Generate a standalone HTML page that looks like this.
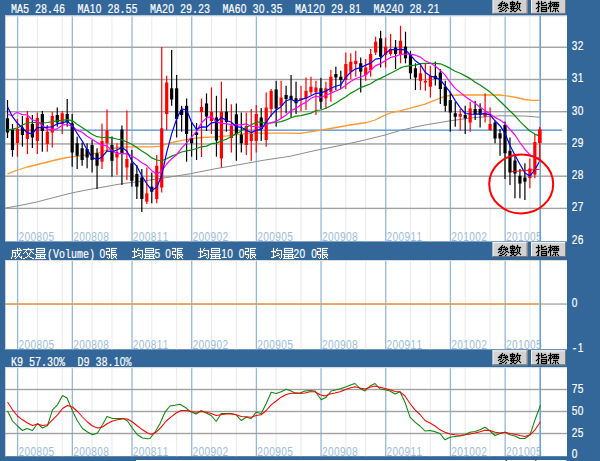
<!DOCTYPE html>
<html><head><meta charset="utf-8"><title>chart</title>
<style>html,body{margin:0;padding:0;background:#336699;overflow:hidden}body{width:600px;height:461px;font-family:"Liberation Mono",monospace}</style>
</head><body>
<svg width="600" height="461" viewBox="0 0 600 461" style="display:block">
<rect width="600" height="461" fill="#336699"/>
<rect x="5" y="15.5" width="562" height="225.9" fill="#fff"/>
<rect x="5" y="15.5" width="562" height="1" fill="#d8dde4"/>
<rect x="5" y="15.5" width="1" height="225.9" fill="#c4d2e2"/>
<rect x="5" y="260" width="562" height="89.30000000000001" fill="#fff"/>
<rect x="5" y="260" width="562" height="1" fill="#d8dde4"/>
<rect x="5" y="260" width="1" height="89.30000000000001" fill="#c4d2e2"/>
<rect x="5" y="367.2" width="562" height="89.0" fill="#fff"/>
<rect x="5" y="367.2" width="562" height="1" fill="#d8dde4"/>
<rect x="5" y="367.2" width="1" height="89.0" fill="#c4d2e2"/>
<rect x="136" y="460" width="430.5" height="1" fill="#f4f6f8"/>
<rect x="505.5" y="460" width="1.5" height="1" fill="#555"/><rect x="535" y="460" width="1.5" height="1" fill="#555"/>
<rect x="36.85" y="16.5" width="1" height="224.9" fill="#e9e9e9"/>
<rect x="61.72" y="16.5" width="1" height="224.9" fill="#e9e9e9"/>
<rect x="91.57" y="16.5" width="1" height="224.9" fill="#e9e9e9"/>
<rect x="111.47" y="16.5" width="1" height="224.9" fill="#e9e9e9"/>
<rect x="151.27" y="16.5" width="1" height="224.9" fill="#e9e9e9"/>
<rect x="176.15" y="16.5" width="1" height="224.9" fill="#e9e9e9"/>
<rect x="210.97" y="16.5" width="1" height="224.9" fill="#e9e9e9"/>
<rect x="235.85" y="16.5" width="1" height="224.9" fill="#e9e9e9"/>
<rect x="275.65" y="16.5" width="1" height="224.9" fill="#e9e9e9"/>
<rect x="300.52" y="16.5" width="1" height="224.9" fill="#e9e9e9"/>
<rect x="345.30" y="16.5" width="1" height="224.9" fill="#e9e9e9"/>
<rect x="365.20" y="16.5" width="1" height="224.9" fill="#e9e9e9"/>
<rect x="409.97" y="16.5" width="1" height="224.9" fill="#e9e9e9"/>
<rect x="429.87" y="16.5" width="1" height="224.9" fill="#e9e9e9"/>
<rect x="464.70" y="16.5" width="1" height="224.9" fill="#e9e9e9"/>
<rect x="489.57" y="16.5" width="1" height="224.9" fill="#e9e9e9"/>
<rect x="529.38" y="16.5" width="1" height="224.9" fill="#e9e9e9"/>
<rect x="16.95" y="16.5" width="1.3" height="224.9" fill="#94b8dd"/>
<rect x="71.67" y="16.5" width="1.3" height="224.9" fill="#94b8dd"/>
<rect x="131.38" y="16.5" width="1.3" height="224.9" fill="#94b8dd"/>
<rect x="191.07" y="16.5" width="1.3" height="224.9" fill="#94b8dd"/>
<rect x="255.75" y="16.5" width="1.3" height="224.9" fill="#94b8dd"/>
<rect x="320.42" y="16.5" width="1.3" height="224.9" fill="#94b8dd"/>
<rect x="385.10" y="16.5" width="1.3" height="224.9" fill="#94b8dd"/>
<rect x="449.77" y="16.5" width="1.3" height="224.9" fill="#94b8dd"/>
<rect x="504.50" y="16.5" width="1.3" height="224.9" fill="#94b8dd"/>
<rect x="36.85" y="261" width="1" height="88.3" fill="#e9e9e9"/>
<rect x="61.72" y="261" width="1" height="88.3" fill="#e9e9e9"/>
<rect x="91.57" y="261" width="1" height="88.3" fill="#e9e9e9"/>
<rect x="111.47" y="261" width="1" height="88.3" fill="#e9e9e9"/>
<rect x="151.27" y="261" width="1" height="88.3" fill="#e9e9e9"/>
<rect x="176.15" y="261" width="1" height="88.3" fill="#e9e9e9"/>
<rect x="210.97" y="261" width="1" height="88.3" fill="#e9e9e9"/>
<rect x="235.85" y="261" width="1" height="88.3" fill="#e9e9e9"/>
<rect x="275.65" y="261" width="1" height="88.3" fill="#e9e9e9"/>
<rect x="300.52" y="261" width="1" height="88.3" fill="#e9e9e9"/>
<rect x="345.30" y="261" width="1" height="88.3" fill="#e9e9e9"/>
<rect x="365.20" y="261" width="1" height="88.3" fill="#e9e9e9"/>
<rect x="409.97" y="261" width="1" height="88.3" fill="#e9e9e9"/>
<rect x="429.87" y="261" width="1" height="88.3" fill="#e9e9e9"/>
<rect x="464.70" y="261" width="1" height="88.3" fill="#e9e9e9"/>
<rect x="489.57" y="261" width="1" height="88.3" fill="#e9e9e9"/>
<rect x="529.38" y="261" width="1" height="88.3" fill="#e9e9e9"/>
<rect x="16.95" y="261" width="1.3" height="88.3" fill="#94b8dd"/>
<rect x="71.67" y="261" width="1.3" height="88.3" fill="#94b8dd"/>
<rect x="131.38" y="261" width="1.3" height="88.3" fill="#94b8dd"/>
<rect x="191.07" y="261" width="1.3" height="88.3" fill="#94b8dd"/>
<rect x="255.75" y="261" width="1.3" height="88.3" fill="#94b8dd"/>
<rect x="320.42" y="261" width="1.3" height="88.3" fill="#94b8dd"/>
<rect x="385.10" y="261" width="1.3" height="88.3" fill="#94b8dd"/>
<rect x="449.77" y="261" width="1.3" height="88.3" fill="#94b8dd"/>
<rect x="504.50" y="261" width="1.3" height="88.3" fill="#94b8dd"/>
<rect x="36.85" y="368.2" width="1" height="88.0" fill="#e9e9e9"/>
<rect x="61.72" y="368.2" width="1" height="88.0" fill="#e9e9e9"/>
<rect x="91.57" y="368.2" width="1" height="88.0" fill="#e9e9e9"/>
<rect x="111.47" y="368.2" width="1" height="88.0" fill="#e9e9e9"/>
<rect x="151.27" y="368.2" width="1" height="88.0" fill="#e9e9e9"/>
<rect x="176.15" y="368.2" width="1" height="88.0" fill="#e9e9e9"/>
<rect x="210.97" y="368.2" width="1" height="88.0" fill="#e9e9e9"/>
<rect x="235.85" y="368.2" width="1" height="88.0" fill="#e9e9e9"/>
<rect x="275.65" y="368.2" width="1" height="88.0" fill="#e9e9e9"/>
<rect x="300.52" y="368.2" width="1" height="88.0" fill="#e9e9e9"/>
<rect x="345.30" y="368.2" width="1" height="88.0" fill="#e9e9e9"/>
<rect x="365.20" y="368.2" width="1" height="88.0" fill="#e9e9e9"/>
<rect x="409.97" y="368.2" width="1" height="88.0" fill="#e9e9e9"/>
<rect x="429.87" y="368.2" width="1" height="88.0" fill="#e9e9e9"/>
<rect x="464.70" y="368.2" width="1" height="88.0" fill="#e9e9e9"/>
<rect x="489.57" y="368.2" width="1" height="88.0" fill="#e9e9e9"/>
<rect x="529.38" y="368.2" width="1" height="88.0" fill="#e9e9e9"/>
<rect x="16.95" y="368.2" width="1.3" height="88.0" fill="#94b8dd"/>
<rect x="71.67" y="368.2" width="1.3" height="88.0" fill="#94b8dd"/>
<rect x="131.38" y="368.2" width="1.3" height="88.0" fill="#94b8dd"/>
<rect x="191.07" y="368.2" width="1.3" height="88.0" fill="#94b8dd"/>
<rect x="255.75" y="368.2" width="1.3" height="88.0" fill="#94b8dd"/>
<rect x="320.42" y="368.2" width="1.3" height="88.0" fill="#94b8dd"/>
<rect x="385.10" y="368.2" width="1.3" height="88.0" fill="#94b8dd"/>
<rect x="449.77" y="368.2" width="1.3" height="88.0" fill="#94b8dd"/>
<rect x="504.50" y="368.2" width="1.3" height="88.0" fill="#94b8dd"/>
<rect x="5" y="46.55" width="562" height="1.4" fill="#a2a2a2"/>
<rect x="5" y="78.78" width="562" height="1.4" fill="#a2a2a2"/>
<rect x="5" y="111.01" width="562" height="1.4" fill="#a2a2a2"/>
<rect x="5" y="143.24" width="562" height="1.4" fill="#a2a2a2"/>
<rect x="5" y="175.47" width="562" height="1.4" fill="#a2a2a2"/>
<rect x="5" y="207.70" width="562" height="1.4" fill="#a2a2a2"/>
<rect x="5" y="303.4" width="562" height="1.3" fill="#a2a2a2"/>
<rect x="5" y="388.8" width="562" height="1.4" fill="#a2a2a2"/>
<rect x="5" y="410.8" width="562" height="1.4" fill="#a2a2a2"/>
<rect x="5" y="432.8" width="562" height="1.4" fill="#a2a2a2"/>
<text transform="translate(18.25,240.5) scale(0.74,1)" x="0.25 8.35 16.46 24.57 32.68 40.79" font-family="Liberation Sans, sans-serif" font-size="13.7" fill="#9dbcd9" >200805</text>
<text transform="translate(72.975,240.5) scale(0.74,1)" x="0.25 8.35 16.46 24.57 32.68 40.79" font-family="Liberation Sans, sans-serif" font-size="13.7" fill="#9dbcd9" >200808</text>
<text transform="translate(132.675,240.5) scale(0.74,1)" x="0.25 8.35 16.46 24.57 32.68 40.79" font-family="Liberation Sans, sans-serif" font-size="13.7" fill="#9dbcd9" >200811</text>
<text transform="translate(192.375,240.5) scale(0.74,1)" x="0.25 8.35 16.46 24.57 32.68 40.79" font-family="Liberation Sans, sans-serif" font-size="13.7" fill="#9dbcd9" >200902</text>
<text transform="translate(257.05,240.5) scale(0.74,1)" x="0.25 8.35 16.46 24.57 32.68 40.79" font-family="Liberation Sans, sans-serif" font-size="13.7" fill="#9dbcd9" >200905</text>
<text transform="translate(321.72499999999997,240.5) scale(0.74,1)" x="0.25 8.35 16.46 24.57 32.68 40.79" font-family="Liberation Sans, sans-serif" font-size="13.7" fill="#9dbcd9" >200908</text>
<text transform="translate(386.4,240.5) scale(0.74,1)" x="0.25 8.35 16.46 24.57 32.68 40.79" font-family="Liberation Sans, sans-serif" font-size="13.7" fill="#9dbcd9" >200911</text>
<text transform="translate(451.075,240.5) scale(0.74,1)" x="0.25 8.35 16.46 24.57 32.68 40.79" font-family="Liberation Sans, sans-serif" font-size="13.7" fill="#9dbcd9" >201002</text>
<text transform="translate(505.79999999999995,240.5) scale(0.74,1)" x="0.25 8.35 16.46 24.57 32.68 40.79" font-family="Liberation Sans, sans-serif" font-size="13.7" fill="#9dbcd9" >201005</text>
<text transform="translate(18.25,349.1) scale(0.74,1)" x="0.25 8.35 16.46 24.57 32.68 40.79" font-family="Liberation Sans, sans-serif" font-size="13.7" fill="#9dbcd9" >200805</text>
<text transform="translate(72.975,349.1) scale(0.74,1)" x="0.25 8.35 16.46 24.57 32.68 40.79" font-family="Liberation Sans, sans-serif" font-size="13.7" fill="#9dbcd9" >200808</text>
<text transform="translate(132.675,349.1) scale(0.74,1)" x="0.25 8.35 16.46 24.57 32.68 40.79" font-family="Liberation Sans, sans-serif" font-size="13.7" fill="#9dbcd9" >200811</text>
<text transform="translate(192.375,349.1) scale(0.74,1)" x="0.25 8.35 16.46 24.57 32.68 40.79" font-family="Liberation Sans, sans-serif" font-size="13.7" fill="#9dbcd9" >200902</text>
<text transform="translate(257.05,349.1) scale(0.74,1)" x="0.25 8.35 16.46 24.57 32.68 40.79" font-family="Liberation Sans, sans-serif" font-size="13.7" fill="#9dbcd9" >200905</text>
<text transform="translate(321.72499999999997,349.1) scale(0.74,1)" x="0.25 8.35 16.46 24.57 32.68 40.79" font-family="Liberation Sans, sans-serif" font-size="13.7" fill="#9dbcd9" >200908</text>
<text transform="translate(386.4,349.1) scale(0.74,1)" x="0.25 8.35 16.46 24.57 32.68 40.79" font-family="Liberation Sans, sans-serif" font-size="13.7" fill="#9dbcd9" >200911</text>
<text transform="translate(451.075,349.1) scale(0.74,1)" x="0.25 8.35 16.46 24.57 32.68 40.79" font-family="Liberation Sans, sans-serif" font-size="13.7" fill="#9dbcd9" >201002</text>
<text transform="translate(505.79999999999995,349.1) scale(0.74,1)" x="0.25 8.35 16.46 24.57 32.68 40.79" font-family="Liberation Sans, sans-serif" font-size="13.7" fill="#9dbcd9" >201005</text>
<text transform="translate(18.25,455.9) scale(0.74,1)" x="0.25 8.35 16.46 24.57 32.68 40.79" font-family="Liberation Sans, sans-serif" font-size="13.7" fill="#9dbcd9" >200805</text>
<text transform="translate(72.975,455.9) scale(0.74,1)" x="0.25 8.35 16.46 24.57 32.68 40.79" font-family="Liberation Sans, sans-serif" font-size="13.7" fill="#9dbcd9" >200808</text>
<text transform="translate(132.675,455.9) scale(0.74,1)" x="0.25 8.35 16.46 24.57 32.68 40.79" font-family="Liberation Sans, sans-serif" font-size="13.7" fill="#9dbcd9" >200811</text>
<text transform="translate(192.375,455.9) scale(0.74,1)" x="0.25 8.35 16.46 24.57 32.68 40.79" font-family="Liberation Sans, sans-serif" font-size="13.7" fill="#9dbcd9" >200902</text>
<text transform="translate(257.05,455.9) scale(0.74,1)" x="0.25 8.35 16.46 24.57 32.68 40.79" font-family="Liberation Sans, sans-serif" font-size="13.7" fill="#9dbcd9" >200905</text>
<text transform="translate(321.72499999999997,455.9) scale(0.74,1)" x="0.25 8.35 16.46 24.57 32.68 40.79" font-family="Liberation Sans, sans-serif" font-size="13.7" fill="#9dbcd9" >200908</text>
<text transform="translate(386.4,455.9) scale(0.74,1)" x="0.25 8.35 16.46 24.57 32.68 40.79" font-family="Liberation Sans, sans-serif" font-size="13.7" fill="#9dbcd9" >200911</text>
<text transform="translate(451.075,455.9) scale(0.74,1)" x="0.25 8.35 16.46 24.57 32.68 40.79" font-family="Liberation Sans, sans-serif" font-size="13.7" fill="#9dbcd9" >201002</text>
<text transform="translate(505.79999999999995,455.9) scale(0.74,1)" x="0.25 8.35 16.46 24.57 32.68 40.79" font-family="Liberation Sans, sans-serif" font-size="13.7" fill="#9dbcd9" >201005</text>
<rect x="5" y="129.4" width="557" height="1.6" fill="#72a4d6"/>
<polyline points="5.5,208.0 25.0,204.5 37.5,201.8 50.0,198.5 62.5,195.3 72.5,192.8 85.0,190.3 97.5,188.0 110.0,185.8 122.5,183.6 140.0,181.5 165.0,177.8 190.0,173.8 215.0,168.8 240.0,164.5 265.0,160.0 290.0,156.3 315.0,150.5 340.0,145.5 365.0,140.0 385.0,135.0 400.0,130.5 415.0,127.0 425.0,125.0 440.0,122.5 450.0,120.8 475.0,117.5 500.0,115.8 525.0,116.0 540.0,117.3" fill="none" stroke="#8c8c8c" stroke-width="1.0" stroke-linejoin="round" />
<polyline points="7.5,173.8 17.5,170.0 27.5,167.0 37.5,164.5 47.5,162.0 57.5,159.5 67.5,157.5 77.5,156.2 87.5,155.0 97.5,153.0 107.5,150.0 117.5,147.5 127.5,146.8 140.0,146.8 152.5,146.8 160.0,146.2 170.0,143.0 180.0,140.8 190.0,138.8 202.5,137.5 215.0,136.8 227.5,135.8 240.0,134.2 252.5,133.2 265.0,133.2 290.0,133.2 300.0,133.3 316.7,130.8 333.3,128.0 350.0,125.0 366.7,122.5 375.0,120.0 383.3,115.8 391.7,112.5 400.0,110.8 425.0,104.2 433.3,100.8 441.7,97.5 450.0,95.3 458.3,95.0 475.0,95.0 491.7,95.0 500.0,95.0 508.3,96.2 516.7,97.5 525.0,99.5 532.0,100.3 540.0,100.4" fill="none" stroke="#ff9a2e" stroke-width="1.3" stroke-linejoin="round" />
<rect x="6.90" y="100.0" width="1.2" height="38.0" fill="#000000"/>
<rect x="5.90" y="118.3" width="3.2" height="14.2" fill="#000000"/>
<rect x="11.88" y="124.0" width="1.2" height="32.7" fill="#000000"/>
<rect x="10.88" y="129.0" width="3.2" height="21.0" fill="#000000"/>
<rect x="16.85" y="119.0" width="1.2" height="37.7" fill="#ff0000"/>
<rect x="15.85" y="129.0" width="3.2" height="14.0" fill="#ff0000"/>
<rect x="21.82" y="116.0" width="1.2" height="30.7" fill="#000000"/>
<rect x="20.82" y="127.5" width="3.2" height="7.5" fill="#000000"/>
<rect x="26.80" y="111.0" width="1.2" height="43.0" fill="#ff0000"/>
<rect x="25.80" y="117.5" width="3.2" height="21.5" fill="#ff0000"/>
<rect x="31.77" y="115.0" width="1.2" height="33.0" fill="#000000"/>
<rect x="30.77" y="124.0" width="3.2" height="13.5" fill="#000000"/>
<rect x="36.75" y="112.5" width="1.2" height="41.5" fill="#ff0000"/>
<rect x="35.75" y="118.0" width="3.2" height="23.0" fill="#ff0000"/>
<rect x="41.72" y="111.0" width="1.2" height="40.7" fill="#000000"/>
<rect x="40.72" y="114.0" width="3.2" height="17.0" fill="#000000"/>
<rect x="46.70" y="125.0" width="1.2" height="26.7" fill="#ff0000"/>
<rect x="45.70" y="131.7" width="3.2" height="12.3" fill="#ff0000"/>
<rect x="51.67" y="111.7" width="1.2" height="35.8" fill="#ff0000"/>
<rect x="50.67" y="116.0" width="3.2" height="16.5" fill="#ff0000"/>
<rect x="56.65" y="107.5" width="1.2" height="19.2" fill="#000000"/>
<rect x="55.65" y="115.0" width="3.2" height="7.5" fill="#000000"/>
<rect x="61.62" y="111.0" width="1.2" height="23.0" fill="#ff0000"/>
<rect x="60.62" y="113.3" width="3.2" height="10.7" fill="#ff0000"/>
<rect x="66.60" y="99.0" width="1.2" height="27.7" fill="#000000"/>
<rect x="65.60" y="114.0" width="3.2" height="8.5" fill="#000000"/>
<rect x="71.58" y="114.0" width="1.2" height="52.7" fill="#000000"/>
<rect x="70.58" y="123.3" width="3.2" height="29.2" fill="#000000"/>
<rect x="76.55" y="136.7" width="1.2" height="32.3" fill="#000000"/>
<rect x="75.55" y="143.3" width="3.2" height="12.5" fill="#000000"/>
<rect x="81.53" y="142.5" width="1.2" height="23.3" fill="#000000"/>
<rect x="80.53" y="148.3" width="3.2" height="11.7" fill="#000000"/>
<rect x="86.50" y="143.3" width="1.2" height="25.0" fill="#000000"/>
<rect x="85.50" y="149.0" width="3.2" height="8.5" fill="#000000"/>
<rect x="91.47" y="140.0" width="1.2" height="32.5" fill="#000000"/>
<rect x="90.47" y="145.0" width="3.2" height="15.0" fill="#000000"/>
<rect x="96.45" y="148.3" width="1.2" height="40.7" fill="#000000"/>
<rect x="95.45" y="153.3" width="3.2" height="12.5" fill="#000000"/>
<rect x="101.42" y="123.5" width="1.2" height="45.5" fill="#ff0000"/>
<rect x="100.42" y="141.0" width="3.2" height="20.7" fill="#ff0000"/>
<rect x="106.40" y="109.5" width="1.2" height="42.2" fill="#ff0000"/>
<rect x="105.40" y="130.5" width="3.2" height="12.8" fill="#ff0000"/>
<rect x="111.38" y="136.5" width="1.2" height="40.2" fill="#000000"/>
<rect x="110.38" y="145.0" width="3.2" height="15.8" fill="#000000"/>
<rect x="116.35" y="143.3" width="1.2" height="31.7" fill="#ff0000"/>
<rect x="115.35" y="151.7" width="3.2" height="5.8" fill="#ff0000"/>
<rect x="121.33" y="125.5" width="1.2" height="59.5" fill="#000000"/>
<rect x="120.33" y="129.5" width="3.2" height="23.5" fill="#000000"/>
<rect x="126.30" y="110.5" width="1.2" height="69.5" fill="#ff0000"/>
<rect x="125.30" y="159.0" width="3.2" height="8.5" fill="#ff0000"/>
<rect x="131.28" y="150.0" width="1.2" height="36.7" fill="#000000"/>
<rect x="130.28" y="163.3" width="3.2" height="17.5" fill="#000000"/>
<rect x="136.25" y="165.0" width="1.2" height="34.0" fill="#000000"/>
<rect x="135.25" y="174.0" width="3.2" height="12.7" fill="#000000"/>
<rect x="141.22" y="169.0" width="1.2" height="43.0" fill="#000000"/>
<rect x="140.22" y="177.5" width="3.2" height="21.5" fill="#000000"/>
<rect x="146.20" y="167.5" width="1.2" height="36.5" fill="#ff0000"/>
<rect x="145.20" y="193.3" width="3.2" height="8.4" fill="#ff0000"/>
<rect x="151.17" y="172.5" width="1.2" height="30.8" fill="#000000"/>
<rect x="150.17" y="186.7" width="3.2" height="5.0" fill="#000000"/>
<rect x="156.15" y="155.0" width="1.2" height="48.3" fill="#ff0000"/>
<rect x="155.15" y="165.8" width="3.2" height="33.2" fill="#ff0000"/>
<rect x="161.12" y="47.0" width="1.2" height="145.5" fill="#ff0000"/>
<rect x="160.12" y="128.3" width="3.2" height="59.2" fill="#ff0000"/>
<rect x="166.10" y="75.8" width="1.2" height="54.2" fill="#ff0000"/>
<rect x="165.10" y="82.5" width="3.2" height="31.5" fill="#ff0000"/>
<rect x="171.07" y="50.0" width="1.2" height="55.8" fill="#000000"/>
<rect x="170.07" y="88.3" width="3.2" height="11.2" fill="#000000"/>
<rect x="176.05" y="75.0" width="1.2" height="62.5" fill="#000000"/>
<rect x="175.05" y="88.3" width="3.2" height="30.7" fill="#000000"/>
<rect x="181.03" y="105.8" width="1.2" height="25.9" fill="#000000"/>
<rect x="180.03" y="110.0" width="3.2" height="5.0" fill="#000000"/>
<rect x="186.00" y="98.5" width="1.2" height="63.2" fill="#000000"/>
<rect x="185.00" y="105.8" width="3.2" height="28.2" fill="#000000"/>
<rect x="190.97" y="122.5" width="1.2" height="34.2" fill="#000000"/>
<rect x="189.97" y="138.3" width="3.2" height="5.0" fill="#000000"/>
<rect x="195.95" y="123.0" width="1.2" height="37.0" fill="#000000"/>
<rect x="194.95" y="132.5" width="3.2" height="2.5" fill="#000000"/>
<rect x="200.92" y="98.5" width="1.2" height="58.5" fill="#ff0000"/>
<rect x="199.92" y="107.0" width="3.2" height="5.0" fill="#ff0000"/>
<rect x="205.90" y="93.5" width="1.2" height="37.5" fill="#000000"/>
<rect x="204.90" y="103.5" width="3.2" height="13.0" fill="#000000"/>
<rect x="210.88" y="87.5" width="1.2" height="46.5" fill="#ff0000"/>
<rect x="209.88" y="112.0" width="3.2" height="9.0" fill="#ff0000"/>
<rect x="215.85" y="95.8" width="1.2" height="60.9" fill="#000000"/>
<rect x="214.85" y="117.5" width="3.2" height="23.0" fill="#000000"/>
<rect x="220.82" y="81.7" width="1.2" height="85.8" fill="#ff0000"/>
<rect x="219.82" y="111.7" width="3.2" height="46.8" fill="#ff0000"/>
<rect x="225.80" y="98.5" width="1.2" height="33.2" fill="#000000"/>
<rect x="224.80" y="111.7" width="3.2" height="10.3" fill="#000000"/>
<rect x="230.77" y="104.3" width="1.2" height="48.2" fill="#ff0000"/>
<rect x="229.77" y="125.5" width="3.2" height="12.5" fill="#ff0000"/>
<rect x="235.75" y="103.5" width="1.2" height="57.3" fill="#000000"/>
<rect x="234.75" y="114.3" width="3.2" height="19.7" fill="#000000"/>
<rect x="240.72" y="112.5" width="1.2" height="40.0" fill="#000000"/>
<rect x="239.72" y="134.5" width="3.2" height="8.8" fill="#000000"/>
<rect x="245.70" y="112.5" width="1.2" height="42.5" fill="#ff0000"/>
<rect x="244.70" y="126.0" width="3.2" height="19.0" fill="#ff0000"/>
<rect x="250.67" y="109.0" width="1.2" height="51.8" fill="#ff0000"/>
<rect x="249.67" y="134.0" width="3.2" height="7.0" fill="#ff0000"/>
<rect x="255.65" y="105.0" width="1.2" height="47.5" fill="#ff0000"/>
<rect x="254.65" y="114.0" width="3.2" height="27.0" fill="#ff0000"/>
<rect x="260.62" y="108.0" width="1.2" height="33.0" fill="#000000"/>
<rect x="259.62" y="117.5" width="3.2" height="11.5" fill="#000000"/>
<rect x="265.60" y="92.5" width="1.2" height="54.2" fill="#ff0000"/>
<rect x="264.60" y="107.5" width="3.2" height="32.5" fill="#ff0000"/>
<rect x="270.57" y="89.0" width="1.2" height="27.7" fill="#ff0000"/>
<rect x="269.57" y="90.8" width="3.2" height="18.2" fill="#ff0000"/>
<rect x="275.55" y="80.8" width="1.2" height="45.9" fill="#000000"/>
<rect x="274.55" y="89.5" width="3.2" height="19.0" fill="#000000"/>
<rect x="280.52" y="80.8" width="1.2" height="38.2" fill="#ff0000"/>
<rect x="279.52" y="97.5" width="3.2" height="8.3" fill="#ff0000"/>
<rect x="285.50" y="85.8" width="1.2" height="27.5" fill="#000000"/>
<rect x="284.50" y="95.0" width="3.2" height="4.0" fill="#000000"/>
<rect x="290.47" y="75.0" width="1.2" height="42.5" fill="#000000"/>
<rect x="289.47" y="95.8" width="3.2" height="4.2" fill="#000000"/>
<rect x="295.45" y="81.7" width="1.2" height="32.3" fill="#000000"/>
<rect x="294.45" y="98.3" width="3.2" height="5.0" fill="#000000"/>
<rect x="300.42" y="85.8" width="1.2" height="25.2" fill="#ff0000"/>
<rect x="299.42" y="98.0" width="3.2" height="2.0" fill="#ff0000"/>
<rect x="305.40" y="77.5" width="1.2" height="32.5" fill="#ff0000"/>
<rect x="304.40" y="90.8" width="3.2" height="7.5" fill="#ff0000"/>
<rect x="310.37" y="76.7" width="1.2" height="18.3" fill="#ff0000"/>
<rect x="309.37" y="86.7" width="3.2" height="5.5" fill="#ff0000"/>
<rect x="315.35" y="80.8" width="1.2" height="34.2" fill="#ff0000"/>
<rect x="314.35" y="87.5" width="3.2" height="4.7" fill="#ff0000"/>
<rect x="320.32" y="77.8" width="1.2" height="31.2" fill="#000000"/>
<rect x="319.32" y="88.3" width="3.2" height="13.4" fill="#000000"/>
<rect x="325.30" y="81.7" width="1.2" height="27.3" fill="#ff0000"/>
<rect x="324.30" y="88.3" width="3.2" height="10.0" fill="#ff0000"/>
<rect x="330.27" y="70.0" width="1.2" height="31.7" fill="#ff0000"/>
<rect x="329.27" y="76.7" width="3.2" height="15.0" fill="#ff0000"/>
<rect x="335.25" y="66.7" width="1.2" height="23.3" fill="#000000"/>
<rect x="334.25" y="74.0" width="3.2" height="3.5" fill="#000000"/>
<rect x="340.22" y="70.8" width="1.2" height="18.2" fill="#000000"/>
<rect x="339.22" y="76.7" width="3.2" height="3.3" fill="#000000"/>
<rect x="345.20" y="52.5" width="1.2" height="36.5" fill="#ff0000"/>
<rect x="344.20" y="64.0" width="3.2" height="16.0" fill="#ff0000"/>
<rect x="350.17" y="53.3" width="1.2" height="25.7" fill="#ff0000"/>
<rect x="349.17" y="61.7" width="3.2" height="10.0" fill="#ff0000"/>
<rect x="355.15" y="50.8" width="1.2" height="25.9" fill="#ff0000"/>
<rect x="354.15" y="60.8" width="3.2" height="3.2" fill="#ff0000"/>
<rect x="360.12" y="57.5" width="1.2" height="35.0" fill="#000000"/>
<rect x="359.12" y="63.3" width="3.2" height="8.4" fill="#000000"/>
<rect x="365.10" y="59.0" width="1.2" height="21.8" fill="#ff0000"/>
<rect x="364.10" y="67.5" width="3.2" height="7.5" fill="#ff0000"/>
<rect x="370.07" y="49.0" width="1.2" height="27.7" fill="#ff0000"/>
<rect x="369.07" y="54.0" width="3.2" height="16.0" fill="#ff0000"/>
<rect x="375.05" y="36.7" width="1.2" height="18.3" fill="#ff0000"/>
<rect x="374.05" y="41.7" width="3.2" height="10.8" fill="#ff0000"/>
<rect x="380.02" y="30.8" width="1.2" height="36.7" fill="#000000"/>
<rect x="379.02" y="38.3" width="3.2" height="18.4" fill="#000000"/>
<rect x="385.00" y="37.5" width="1.2" height="30.0" fill="#ff0000"/>
<rect x="384.00" y="46.7" width="3.2" height="8.3" fill="#ff0000"/>
<rect x="389.97" y="34.0" width="1.2" height="21.8" fill="#ff0000"/>
<rect x="388.97" y="49.0" width="3.2" height="5.0" fill="#ff0000"/>
<rect x="394.95" y="40.0" width="1.2" height="29.0" fill="#000000"/>
<rect x="393.95" y="47.5" width="3.2" height="6.5" fill="#000000"/>
<rect x="399.92" y="25.8" width="1.2" height="37.5" fill="#ff0000"/>
<rect x="398.92" y="40.8" width="3.2" height="13.2" fill="#ff0000"/>
<rect x="404.90" y="31.7" width="1.2" height="31.6" fill="#000000"/>
<rect x="403.90" y="46.7" width="3.2" height="11.6" fill="#000000"/>
<rect x="409.87" y="50.8" width="1.2" height="28.2" fill="#000000"/>
<rect x="408.87" y="55.0" width="3.2" height="18.3" fill="#000000"/>
<rect x="414.85" y="63.3" width="1.2" height="26.7" fill="#000000"/>
<rect x="413.85" y="68.3" width="3.2" height="9.2" fill="#000000"/>
<rect x="419.82" y="65.8" width="1.2" height="24.2" fill="#ff0000"/>
<rect x="418.82" y="73.3" width="3.2" height="7.5" fill="#ff0000"/>
<rect x="424.80" y="63.3" width="1.2" height="27.5" fill="#ff0000"/>
<rect x="423.80" y="80.8" width="3.2" height="1.7" fill="#ff0000"/>
<rect x="429.77" y="65.8" width="1.2" height="31.7" fill="#ff0000"/>
<rect x="428.77" y="75.8" width="3.2" height="10.9" fill="#ff0000"/>
<rect x="434.75" y="61.7" width="1.2" height="23.8" fill="#000000"/>
<rect x="433.75" y="75.8" width="3.2" height="3.2" fill="#000000"/>
<rect x="439.72" y="69.0" width="1.2" height="35.0" fill="#000000"/>
<rect x="438.72" y="72.5" width="3.2" height="16.5" fill="#000000"/>
<rect x="444.70" y="80.8" width="1.2" height="30.9" fill="#000000"/>
<rect x="443.70" y="86.7" width="3.2" height="19.1" fill="#000000"/>
<rect x="449.67" y="91.7" width="1.2" height="40.0" fill="#000000"/>
<rect x="448.67" y="100.0" width="3.2" height="12.5" fill="#000000"/>
<rect x="454.65" y="101.7" width="1.2" height="25.0" fill="#000000"/>
<rect x="453.65" y="113.3" width="3.2" height="3.4" fill="#000000"/>
<rect x="459.62" y="109.0" width="1.2" height="21.8" fill="#ff0000"/>
<rect x="458.62" y="114.0" width="3.2" height="2.7" fill="#ff0000"/>
<rect x="464.60" y="105.8" width="1.2" height="28.2" fill="#000000"/>
<rect x="463.60" y="115.0" width="3.2" height="3.3" fill="#000000"/>
<rect x="469.57" y="101.7" width="1.2" height="30.0" fill="#ff0000"/>
<rect x="468.57" y="108.3" width="3.2" height="14.2" fill="#ff0000"/>
<rect x="474.55" y="100.8" width="1.2" height="19.2" fill="#000000"/>
<rect x="473.55" y="109.0" width="3.2" height="5.0" fill="#000000"/>
<rect x="479.52" y="103.3" width="1.2" height="24.2" fill="#000000"/>
<rect x="478.52" y="109.0" width="3.2" height="6.0" fill="#000000"/>
<rect x="484.50" y="93.3" width="1.2" height="29.2" fill="#ff0000"/>
<rect x="483.50" y="112.5" width="3.2" height="4.2" fill="#ff0000"/>
<rect x="489.47" y="107.5" width="1.2" height="23.3" fill="#ff0000"/>
<rect x="488.47" y="124.0" width="3.2" height="6.0" fill="#ff0000"/>
<rect x="494.45" y="120.8" width="1.2" height="22.5" fill="#000000"/>
<rect x="493.45" y="122.5" width="3.2" height="16.0" fill="#000000"/>
<rect x="499.42" y="129.0" width="1.2" height="26.8" fill="#000000"/>
<rect x="498.42" y="133.3" width="3.2" height="5.2" fill="#000000"/>
<rect x="504.40" y="121.5" width="1.2" height="57.5" fill="#000000"/>
<rect x="503.40" y="125.0" width="3.2" height="28.3" fill="#000000"/>
<rect x="509.37" y="137.5" width="1.2" height="47.5" fill="#000000"/>
<rect x="508.37" y="150.8" width="3.2" height="21.7" fill="#000000"/>
<rect x="514.35" y="155.8" width="1.2" height="42.5" fill="#000000"/>
<rect x="513.35" y="160.5" width="3.2" height="13.0" fill="#000000"/>
<rect x="519.32" y="169.0" width="1.2" height="29.3" fill="#000000"/>
<rect x="518.32" y="175.8" width="3.2" height="7.7" fill="#000000"/>
<rect x="524.30" y="163.3" width="1.2" height="36.7" fill="#000000"/>
<rect x="523.30" y="177.5" width="3.2" height="4.2" fill="#000000"/>
<rect x="529.27" y="158.5" width="1.2" height="29.8" fill="#ff0000"/>
<rect x="528.27" y="168.5" width="3.2" height="9.5" fill="#ff0000"/>
<rect x="534.25" y="134.0" width="1.2" height="44.3" fill="#ff0000"/>
<rect x="533.25" y="142.0" width="3.2" height="32.5" fill="#ff0000"/>
<rect x="539.22" y="127.0" width="1.2" height="33.0" fill="#ff0000"/>
<rect x="538.22" y="129.5" width="3.2" height="13.5" fill="#ff0000"/>
<polyline points="7.5,130.0 12.5,129.2 17.5,128.0 22.5,125.0 27.5,123.0 32.5,122.5 37.5,122.5 42.5,123.0 47.5,122.5 52.5,121.7 57.5,120.8 62.5,120.3 67.5,119.7 72.5,120.8 77.0,124.2 82.0,127.5 87.0,130.8 92.0,134.2 97.0,136.7 102.0,137.5 107.0,137.4 112.0,137.9 116.9,139.0 121.9,139.9 126.9,142.0 131.9,144.2 136.8,147.6 141.8,151.0 146.8,154.1 151.8,157.9 156.8,160.0 161.7,160.8 166.7,158.8 171.7,156.1 176.6,154.3 181.6,152.0 186.6,150.9 191.6,150.0 196.5,148.5 201.5,146.8 206.5,146.1 211.5,143.7 216.4,143.1 221.4,141.0 226.4,139.2 231.4,136.4 236.3,133.8 241.3,131.0 246.3,127.6 251.3,124.7 256.2,122.2 261.2,122.2 266.2,123.4 271.2,123.0 276.1,122.5 281.1,121.6 286.1,119.9 291.1,117.7 296.0,116.1 301.0,115.7 306.0,114.4 311.0,113.1 315.9,110.5 320.9,110.0 325.9,108.3 330.9,105.8 335.8,103.0 340.8,99.8 345.8,96.7 350.8,93.1 355.8,90.5 360.7,87.6 365.7,85.6 370.7,83.8 375.6,80.4 380.6,78.4 385.6,75.8 390.6,73.2 395.5,70.8 400.5,67.9 405.5,66.3 410.5,65.6 415.4,65.1 420.4,63.7 425.4,63.3 430.4,63.3 435.3,63.3 440.3,63.8 445.3,65.9 450.3,68.4 455.2,71.2 460.2,73.3 465.2,75.9 470.2,78.6 475.1,82.2 480.1,85.1 485.1,88.4 490.1,92.1 495.0,96.4 500.0,101.3 505.0,106.0 510.0,111.0 515.0,115.8 519.9,121.3 524.9,126.3 529.9,131.0 534.8,134.1 539.8,136.1" fill="none" stroke="#0a8a0a" stroke-width="1.2" stroke-linejoin="round" />
<polyline points="7.5,114.2 12.5,115.8 15.0,113.3 17.5,112.5 22.5,114.7 27.5,115.0 30.0,117.5 32.5,120.0 35.8,120.8 39.2,122.5 43.3,126.3 47.5,129.2 52.3,129.8 57.2,128.8 62.2,125.2 67.2,124.5 72.2,126.2 77.1,130.1 82.1,132.3 87.1,136.3 92.1,139.2 97.0,142.6 102.0,145.1 107.0,145.9 112.0,150.6 116.9,153.6 121.9,153.6 126.9,153.9 131.9,156.0 136.8,158.9 141.8,162.8 146.8,165.6 151.8,170.7 156.8,174.2 161.7,170.9 166.7,164.0 171.7,158.7 176.6,154.7 181.6,148.1 186.6,142.8 191.6,137.2 196.5,131.4 201.5,122.9 206.5,118.0 211.5,116.4 216.4,122.2 221.4,123.4 226.4,123.7 231.4,124.8 236.3,124.8 241.3,124.8 246.3,123.8 251.3,126.5 256.2,126.3 261.2,128.0 266.2,124.7 271.2,122.6 276.1,121.3 281.1,118.5 286.1,115.0 291.1,110.6 296.0,108.4 301.0,104.8 306.0,102.4 311.0,98.2 315.9,96.2 320.9,97.3 325.9,95.3 330.9,93.2 335.8,91.0 340.8,89.0 345.8,85.1 350.8,81.5 355.8,78.5 360.7,77.0 365.7,75.0 370.7,70.2 375.6,65.6 380.6,63.6 385.6,60.5 390.6,57.4 395.5,56.4 400.5,54.3 405.5,54.0 410.5,54.2 415.4,55.2 420.4,57.1 425.4,61.0 430.4,63.0 435.3,66.2 440.3,70.2 445.3,75.4 450.3,82.5 455.2,88.4 460.2,92.4 465.2,96.5 470.2,100.0 475.1,103.3 480.1,107.3 485.1,110.6 490.1,114.1 495.0,117.4 500.0,120.0 505.0,123.6 510.0,129.5 515.0,135.0 519.9,142.5 524.9,149.3 529.9,154.7 534.8,157.6 539.8,158.2" fill="none" stroke="#ff00ff" stroke-width="1.2" stroke-linejoin="round" />
<polyline points="7.5,106.7 12.5,116.7 17.5,123.3 27.4,132.8 32.4,133.8 37.3,127.4 42.3,127.8 47.3,127.1 52.3,126.8 57.2,123.8 62.2,122.9 67.2,121.2 72.2,125.4 77.1,133.3 82.1,140.8 87.1,149.7 92.1,157.2 97.0,159.8 102.0,156.9 107.0,151.0 112.0,151.6 116.9,150.0 121.9,147.4 126.9,151.0 131.9,161.1 136.8,166.2 141.8,175.7 146.8,183.8 151.8,190.3 156.8,187.3 161.7,175.6 166.7,152.3 171.7,133.6 176.6,119.0 181.6,108.9 186.6,110.0 191.6,122.2 196.5,129.3 201.5,126.9 206.5,127.2 211.5,122.8 216.4,122.2 221.4,117.5 226.4,120.5 231.4,122.3 236.3,126.7 241.3,127.3 246.3,130.2 251.3,132.6 256.2,130.3 261.2,129.3 266.2,122.1 271.2,115.1 276.1,110.0 281.1,106.7 286.1,100.7 291.1,99.2 296.0,101.7 301.0,99.6 306.0,98.2 311.0,95.8 315.9,93.3 320.9,92.9 325.9,91.0 330.9,88.2 335.8,86.3 340.8,84.8 345.8,77.3 350.8,72.0 355.8,68.8 360.7,67.6 365.7,65.1 370.7,63.1 375.6,59.1 380.6,58.3 385.6,53.3 390.6,49.6 395.5,49.6 400.5,49.4 405.5,49.8 410.5,55.1 415.4,60.8 420.4,64.6 425.4,72.6 430.4,76.1 435.3,77.3 440.3,79.6 445.3,86.1 450.3,92.4 455.2,100.6 460.2,107.6 465.2,113.5 470.2,114.0 475.1,114.3 480.1,113.9 485.1,113.6 490.1,114.8 495.0,120.8 500.0,125.7 505.0,133.4 510.0,145.4 515.0,155.3 519.9,164.3 524.9,172.9 529.9,175.9 534.8,169.8 539.8,161.0" fill="none" stroke="#0000ff" stroke-width="1.2" stroke-linejoin="round" />
<polyline points="510.8,171.7 539.5,169.3" fill="none" stroke="#ff0000" stroke-width="1.0" stroke-linejoin="round" />
<rect x="539.4" y="15.5" width="1.6" height="225.9" fill="#6da3dc"/>
<rect x="539.4" y="260" width="1.6" height="89.3" fill="#6da3dc"/>
<rect x="539.4" y="367.2" width="1.6" height="89.0" fill="#6da3dc"/>
<rect x="539.22" y="127.0" width="1.2" height="33.0" fill="#ff0000"/>
<rect x="538.22" y="129.5" width="3.2" height="13.5" fill="#ff0000"/>
<ellipse cx="521.2" cy="184" rx="32" ry="29.5" fill="none" stroke="#ff0000" stroke-width="2"/>
<rect x="5" y="303.45" width="535" height="1.15" fill="#ff9933"/>
<polyline points="7.5,411.0 12.5,421.0 17.5,426.0 22.5,430.5 27.0,428.5 32.5,430.5 37.5,423.5 42.5,428.0 47.5,425.5 52.5,409.8 57.5,404.8 62.5,395.5 67.0,398.0 72.5,411.0 77.5,421.0 82.5,428.5 87.5,432.0 92.5,434.8 97.5,433.0 102.5,424.8 107.0,416.5 112.5,418.5 117.5,418.5 123.8,418.5 127.5,421.0 132.5,428.5 137.5,434.8 142.5,438.0 147.5,438.7 150.0,438.5 155.0,432.2 160.0,423.5 165.0,412.2 170.0,406.0 175.0,405.2 180.0,404.2 185.0,407.2 190.0,411.5 196.2,414.0 201.2,410.5 206.2,413.0 211.2,415.5 216.2,421.5 221.2,413.5 226.2,413.5 231.2,413.5 236.2,414.8 241.2,420.5 246.2,417.2 251.2,418.5 256.2,412.2 261.2,413.5 266.2,403.5 271.2,392.2 276.2,393.5 281.2,391.8 286.2,389.2 290.0,390.5 295.0,393.0 300.0,393.0 305.0,391.0 310.0,390.5 315.0,391.0 321.2,399.8 326.2,397.2 331.2,391.0 336.2,389.8 341.2,388.5 346.2,386.8 351.2,384.8 355.0,383.5 360.0,388.5 365.0,391.0 370.0,386.0 375.0,383.5 380.0,389.0 385.0,389.8 390.0,391.0 395.0,394.0 400.0,391.8 405.0,402.2 410.0,417.2 415.0,422.2 420.0,426.0 425.0,431.0 430.0,430.5 435.0,431.8 440.0,433.5 445.0,439.8 450.0,437.2 455.0,436.5 460.0,436.0 465.0,434.8 470.0,432.2 475.0,431.5 480.0,429.8 485.0,427.2 490.0,431.0 495.0,435.5 500.0,433.5 505.0,432.2 510.0,434.8 515.0,436.0 520.0,438.5 525.0,438.5 530.0,434.8 535.0,419.8 540.5,405.2" fill="none" stroke="#0a8a0a" stroke-width="1.05" stroke-linejoin="round" />
<polyline points="7.5,402.0 12.5,409.8 17.5,416.0 22.5,419.8 27.5,423.0 32.5,425.5 37.5,424.0 42.5,425.5 47.5,424.8 52.5,419.8 57.5,414.8 62.5,408.5 67.5,405.5 72.5,407.0 77.5,411.5 82.5,417.0 87.5,422.0 92.5,426.0 97.5,428.0 102.5,427.0 107.5,423.5 112.5,421.0 117.5,419.8 122.5,419.0 127.5,419.0 132.5,422.0 137.5,426.0 142.5,429.8 147.5,433.0 151.2,434.2 156.2,432.2 161.2,427.2 166.2,421.0 171.2,416.8 176.2,413.0 181.2,410.5 186.2,410.5 191.2,411.5 196.2,412.2 201.2,411.5 206.2,412.2 211.2,413.5 216.2,415.5 221.2,414.8 226.2,414.0 231.2,414.0 236.2,414.8 241.2,416.5 246.2,416.8 251.2,417.2 256.2,415.5 261.2,414.8 266.2,410.5 271.2,404.8 276.2,401.0 281.2,397.2 286.2,394.5 290.0,393.5 295.0,393.0 300.0,393.5 305.0,393.0 310.0,391.8 315.0,391.8 320.0,394.8 325.0,396.0 330.0,394.0 335.0,393.0 340.0,391.8 345.0,389.8 350.0,388.0 355.0,386.8 360.0,388.0 365.0,389.0 370.0,387.2 375.0,386.0 380.0,387.2 385.0,388.5 390.0,389.8 395.0,391.5 400.0,391.8 405.0,396.0 410.0,403.5 415.0,409.8 420.0,414.5 425.0,420.5 430.0,423.0 435.0,426.0 440.0,429.8 445.0,432.2 450.0,434.0 455.0,434.8 460.0,435.2 465.0,434.8 470.0,434.0 475.0,433.0 480.0,431.8 485.0,430.2 490.0,430.5 495.0,432.2 500.0,433.0 505.0,432.2 510.0,433.5 515.0,434.2 520.0,435.5 525.0,436.5 530.0,434.8 535.0,429.8 540.5,421.8" fill="none" stroke="#ff0000" stroke-width="1.05" stroke-linejoin="round" />
<text transform="translate(11,13) scale(0.74,1)" x="0.00 8.11 48.65" font-family="Liberation Mono, monospace" font-size="13.5" fill="#fff"  stroke="#fff" stroke-width="0.2">MA.</text><text transform="translate(11,13) scale(0.74,1)" x="16.46 32.68 40.79 57.00 65.11" font-family="Liberation Sans, sans-serif" font-size="13.7" fill="#fff"  stroke="#fff" stroke-width="0.2">52846</text>
<text transform="translate(77.5,13) scale(0.74,1)" x="0.00 8.11 56.76" font-family="Liberation Mono, monospace" font-size="13.5" fill="#fff"  stroke="#fff" stroke-width="0.2">MA.</text><text transform="translate(77.5,13) scale(0.74,1)" x="16.46 24.57 40.79 48.89 65.11 73.22" font-family="Liberation Sans, sans-serif" font-size="13.7" fill="#fff"  stroke="#fff" stroke-width="0.2">102855</text>
<text transform="translate(150,13) scale(0.74,1)" x="0.00 8.11 56.76" font-family="Liberation Mono, monospace" font-size="13.5" fill="#fff"  stroke="#fff" stroke-width="0.2">MA.</text><text transform="translate(150,13) scale(0.74,1)" x="16.46 24.57 40.79 48.89 65.11 73.22" font-family="Liberation Sans, sans-serif" font-size="13.7" fill="#fff"  stroke="#fff" stroke-width="0.2">202923</text>
<text transform="translate(222.5,13) scale(0.74,1)" x="0.00 8.11 56.76" font-family="Liberation Mono, monospace" font-size="13.5" fill="#fff"  stroke="#fff" stroke-width="0.2">MA.</text><text transform="translate(222.5,13) scale(0.74,1)" x="16.46 24.57 40.79 48.89 65.11 73.22" font-family="Liberation Sans, sans-serif" font-size="13.7" fill="#fff"  stroke="#fff" stroke-width="0.2">603035</text>
<text transform="translate(295,13) scale(0.74,1)" x="0.00 8.11 64.86" font-family="Liberation Mono, monospace" font-size="13.5" fill="#fff"  stroke="#fff" stroke-width="0.2">MA.</text><text transform="translate(295,13) scale(0.74,1)" x="16.46 24.57 32.68 48.89 57.00 73.22 81.33" font-family="Liberation Sans, sans-serif" font-size="13.7" fill="#fff"  stroke="#fff" stroke-width="0.2">1202981</text>
<text transform="translate(373.5,13) scale(0.74,1)" x="0.00 8.11 64.86" font-family="Liberation Mono, monospace" font-size="13.5" fill="#fff"  stroke="#fff" stroke-width="0.2">MA.</text><text transform="translate(373.5,13) scale(0.74,1)" x="16.46 24.57 32.68 48.89 57.00 73.22 81.33" font-family="Liberation Sans, sans-serif" font-size="13.7" fill="#fff"  stroke="#fff" stroke-width="0.2">2402821</text>
<text transform="translate(11,365.5) scale(0.74,1)" x="0.00 40.54 64.86" font-family="Liberation Mono, monospace" font-size="13.5" fill="#fff"  stroke="#fff" stroke-width="0.2">K.%</text><text transform="translate(11,365.5) scale(0.74,1)" x="8.35 24.57 32.68 48.89 57.00" font-family="Liberation Sans, sans-serif" font-size="13.7" fill="#fff"  stroke="#fff" stroke-width="0.2">95730</text>
<text transform="translate(77.5,365.5) scale(0.74,1)" x="0.00 40.54 64.86" font-family="Liberation Mono, monospace" font-size="13.5" fill="#fff"  stroke="#fff" stroke-width="0.2">D.%</text><text transform="translate(77.5,365.5) scale(0.74,1)" x="8.35 24.57 32.68 48.89 57.00" font-family="Liberation Sans, sans-serif" font-size="13.7" fill="#fff"  stroke="#fff" stroke-width="0.2">93810</text>
<text transform="translate(571.6,50.25) scale(0.74,1)" x="0.25 8.35" font-family="Liberation Sans, sans-serif" font-size="13.7" fill="#fff"  stroke="#fff" stroke-width="0.2">32</text>
<text transform="translate(571.6,82.47999999999999) scale(0.74,1)" x="0.25 8.35" font-family="Liberation Sans, sans-serif" font-size="13.7" fill="#fff"  stroke="#fff" stroke-width="0.2">31</text>
<text transform="translate(571.6,114.71) scale(0.74,1)" x="0.25 8.35" font-family="Liberation Sans, sans-serif" font-size="13.7" fill="#fff"  stroke="#fff" stroke-width="0.2">30</text>
<text transform="translate(571.6,146.94) scale(0.74,1)" x="0.25 8.35" font-family="Liberation Sans, sans-serif" font-size="13.7" fill="#fff"  stroke="#fff" stroke-width="0.2">29</text>
<text transform="translate(571.6,179.17) scale(0.74,1)" x="0.25 8.35" font-family="Liberation Sans, sans-serif" font-size="13.7" fill="#fff"  stroke="#fff" stroke-width="0.2">28</text>
<text transform="translate(571.6,211.39999999999998) scale(0.74,1)" x="0.25 8.35" font-family="Liberation Sans, sans-serif" font-size="13.7" fill="#fff"  stroke="#fff" stroke-width="0.2">27</text>
<text transform="translate(571.6,243.63) scale(0.74,1)" x="0.25 8.35" font-family="Liberation Sans, sans-serif" font-size="13.7" fill="#fff"  stroke="#fff" stroke-width="0.2">26</text>
<text transform="translate(571.6,306.6) scale(0.74,1)" x="0.25" font-family="Liberation Sans, sans-serif" font-size="13.7" fill="#fff"  stroke="#fff" stroke-width="0.2">0</text>
<text transform="translate(571.6,352) scale(0.74,1)" x="0.00" font-family="Liberation Mono, monospace" font-size="13.5" fill="#fff"  stroke="#fff" stroke-width="0.2">-</text><text transform="translate(571.6,352) scale(0.74,1)" x="8.35" font-family="Liberation Sans, sans-serif" font-size="13.7" fill="#fff"  stroke="#fff" stroke-width="0.2">1</text>
<text transform="translate(571.6,392.5) scale(0.74,1)" x="0.25 8.35" font-family="Liberation Sans, sans-serif" font-size="13.7" fill="#fff"  stroke="#fff" stroke-width="0.2">75</text>
<text transform="translate(571.6,414.5) scale(0.74,1)" x="0.25 8.35" font-family="Liberation Sans, sans-serif" font-size="13.7" fill="#fff"  stroke="#fff" stroke-width="0.2">50</text>
<text transform="translate(571.6,436.5) scale(0.74,1)" x="0.25 8.35" font-family="Liberation Sans, sans-serif" font-size="13.7" fill="#fff"  stroke="#fff" stroke-width="0.2">25</text>
<text transform="translate(571.6,458.2) scale(0.74,1)" x="0.25" font-family="Liberation Sans, sans-serif" font-size="13.7" fill="#fff"  stroke="#fff" stroke-width="0.2">0</text>
<path d="M17 248h1v1h-1zM19 248h1v1h-1zM17 249h1v1h-1zM20 249h1v1h-1zM12 250h10v1h-10zM12 251h1v1h-1zM17 251h1v1h-1zM12 252h4v1h-4zM17 252h1v1h-1zM20 252h1v1h-1zM12 253h1v1h-1zM15 253h1v1h-1zM17 253h1v1h-1zM19 253h1v1h-1zM12 254h1v1h-1zM15 254h1v1h-1zM18 254h2v1h-2zM12 255h1v1h-1zM15 255h1v1h-1zM18 255h1v1h-1zM12 256h1v1h-1zM14 256h2v1h-2zM17 256h1v1h-1zM19 256h1v1h-1zM21 256h1v1h-1zM11 257h1v1h-1zM16 257h1v1h-1zM20 257h2v1h-2zM11 258h1v1h-1zM15 258h1v1h-1zM21 258h1v1h-1z" fill="#fff" stroke="#fff" stroke-width="0.15"/>
<path d="M28 248h1v1h-1zM23 249h11v1h-11zM26 250h1v1h-1zM30 250h1v1h-1zM25 251h1v1h-1zM31 251h1v1h-1zM24 252h1v1h-1zM26 252h1v1h-1zM30 252h1v1h-1zM32 252h1v1h-1zM23 253h1v1h-1zM27 253h1v1h-1zM29 253h1v1h-1zM33 253h1v1h-1zM27 254h1v1h-1zM29 254h1v1h-1zM28 255h1v1h-1zM27 256h1v1h-1zM29 256h1v1h-1zM25 257h2v1h-2zM30 257h2v1h-2zM23 258h2v1h-2zM32 258h2v1h-2z" fill="#fff" stroke="#fff" stroke-width="0.15"/>
<path d="M36 248h9v1h-9zM36 249h1v1h-1zM44 249h1v1h-1zM36 250h9v1h-9zM36 251h1v1h-1zM44 251h1v1h-1zM36 252h9v1h-9zM35 254h11v1h-11zM36 255h1v1h-1zM40 255h1v1h-1zM44 255h1v1h-1zM36 256h9v1h-9zM36 257h1v1h-1zM40 257h1v1h-1zM44 257h1v1h-1zM35 258h11v1h-11z" fill="#fff" stroke="#fff" stroke-width="0.15"/>
<path d="M106 248h4v1h-4zM111 248h6v1h-6zM109 249h1v1h-1zM111 249h1v1h-1zM109 250h1v1h-1zM111 250h5v1h-5zM106 251h4v1h-4zM111 251h1v1h-1zM106 252h1v1h-1zM111 252h5v1h-5zM106 253h1v1h-1zM111 253h1v1h-1zM106 254h4v1h-4zM111 254h6v1h-6zM109 255h1v1h-1zM111 255h1v1h-1zM113 255h1v1h-1zM116 255h1v1h-1zM109 256h1v1h-1zM111 256h1v1h-1zM114 256h2v1h-2zM107 257h1v1h-1zM109 257h1v1h-1zM111 257h1v1h-1zM113 257h1v1h-1zM115 257h1v1h-1zM108 258h1v1h-1zM111 258h2v1h-2zM116 258h1v1h-1z" fill="#fff" stroke="#fff" stroke-width="0.15"/>
<path d="M134 248h1v1h-1zM138 248h1v1h-1zM134 249h1v1h-1zM137 249h1v1h-1zM134 250h1v1h-1zM137 250h6v1h-6zM132 251h5v1h-5zM142 251h1v1h-1zM134 252h1v1h-1zM136 252h1v1h-1zM142 252h1v1h-1zM134 253h1v1h-1zM138 253h2v1h-2zM142 253h1v1h-1zM134 254h1v1h-1zM140 254h1v1h-1zM142 254h1v1h-1zM134 255h1v1h-1zM137 255h3v1h-3zM142 255h1v1h-1zM134 256h3v1h-3zM142 256h1v1h-1zM132 257h3v1h-3zM140 257h1v1h-1zM142 257h1v1h-1zM141 258h1v1h-1z" fill="#fff" stroke="#fff" stroke-width="0.15"/>
<path d="M145 248h9v1h-9zM145 249h1v1h-1zM153 249h1v1h-1zM145 250h9v1h-9zM145 251h1v1h-1zM153 251h1v1h-1zM145 252h9v1h-9zM144 254h11v1h-11zM145 255h1v1h-1zM149 255h1v1h-1zM153 255h1v1h-1zM145 256h9v1h-9zM145 257h1v1h-1zM149 257h1v1h-1zM153 257h1v1h-1zM144 258h11v1h-11z" fill="#fff" stroke="#fff" stroke-width="0.15"/>
<path d="M172 248h4v1h-4zM177 248h6v1h-6zM175 249h1v1h-1zM177 249h1v1h-1zM175 250h1v1h-1zM177 250h5v1h-5zM172 251h4v1h-4zM177 251h1v1h-1zM172 252h1v1h-1zM177 252h5v1h-5zM172 253h1v1h-1zM177 253h1v1h-1zM172 254h4v1h-4zM177 254h6v1h-6zM175 255h1v1h-1zM177 255h1v1h-1zM179 255h1v1h-1zM182 255h1v1h-1zM175 256h1v1h-1zM177 256h1v1h-1zM180 256h2v1h-2zM173 257h1v1h-1zM175 257h1v1h-1zM177 257h1v1h-1zM179 257h1v1h-1zM181 257h1v1h-1zM174 258h1v1h-1zM177 258h2v1h-2zM182 258h1v1h-1z" fill="#fff" stroke="#fff" stroke-width="0.15"/>
<path d="M200 248h1v1h-1zM204 248h1v1h-1zM200 249h1v1h-1zM203 249h1v1h-1zM200 250h1v1h-1zM203 250h6v1h-6zM198 251h5v1h-5zM208 251h1v1h-1zM200 252h1v1h-1zM202 252h1v1h-1zM208 252h1v1h-1zM200 253h1v1h-1zM204 253h2v1h-2zM208 253h1v1h-1zM200 254h1v1h-1zM206 254h1v1h-1zM208 254h1v1h-1zM200 255h1v1h-1zM203 255h3v1h-3zM208 255h1v1h-1zM200 256h3v1h-3zM208 256h1v1h-1zM198 257h3v1h-3zM206 257h1v1h-1zM208 257h1v1h-1zM207 258h1v1h-1z" fill="#fff" stroke="#fff" stroke-width="0.15"/>
<path d="M211 248h9v1h-9zM211 249h1v1h-1zM219 249h1v1h-1zM211 250h9v1h-9zM211 251h1v1h-1zM219 251h1v1h-1zM211 252h9v1h-9zM210 254h11v1h-11zM211 255h1v1h-1zM215 255h1v1h-1zM219 255h1v1h-1zM211 256h9v1h-9zM211 257h1v1h-1zM215 257h1v1h-1zM219 257h1v1h-1zM210 258h11v1h-11z" fill="#fff" stroke="#fff" stroke-width="0.15"/>
<path d="M245 248h4v1h-4zM250 248h6v1h-6zM248 249h1v1h-1zM250 249h1v1h-1zM248 250h1v1h-1zM250 250h5v1h-5zM245 251h4v1h-4zM250 251h1v1h-1zM245 252h1v1h-1zM250 252h5v1h-5zM245 253h1v1h-1zM250 253h1v1h-1zM245 254h4v1h-4zM250 254h6v1h-6zM248 255h1v1h-1zM250 255h1v1h-1zM252 255h1v1h-1zM255 255h1v1h-1zM248 256h1v1h-1zM250 256h1v1h-1zM253 256h2v1h-2zM246 257h1v1h-1zM248 257h1v1h-1zM250 257h1v1h-1zM252 257h1v1h-1zM254 257h1v1h-1zM247 258h1v1h-1zM250 258h2v1h-2zM255 258h1v1h-1z" fill="#fff" stroke="#fff" stroke-width="0.15"/>
<path d="M273 248h1v1h-1zM277 248h1v1h-1zM273 249h1v1h-1zM276 249h1v1h-1zM273 250h1v1h-1zM276 250h6v1h-6zM271 251h5v1h-5zM281 251h1v1h-1zM273 252h1v1h-1zM275 252h1v1h-1zM281 252h1v1h-1zM273 253h1v1h-1zM277 253h2v1h-2zM281 253h1v1h-1zM273 254h1v1h-1zM279 254h1v1h-1zM281 254h1v1h-1zM273 255h1v1h-1zM276 255h3v1h-3zM281 255h1v1h-1zM273 256h3v1h-3zM281 256h1v1h-1zM271 257h3v1h-3zM279 257h1v1h-1zM281 257h1v1h-1zM280 258h1v1h-1z" fill="#fff" stroke="#fff" stroke-width="0.15"/>
<path d="M284 248h9v1h-9zM284 249h1v1h-1zM292 249h1v1h-1zM284 250h9v1h-9zM284 251h1v1h-1zM292 251h1v1h-1zM284 252h9v1h-9zM283 254h11v1h-11zM284 255h1v1h-1zM288 255h1v1h-1zM292 255h1v1h-1zM284 256h9v1h-9zM284 257h1v1h-1zM288 257h1v1h-1zM292 257h1v1h-1zM283 258h11v1h-11z" fill="#fff" stroke="#fff" stroke-width="0.15"/>
<path d="M317 248h4v1h-4zM322 248h6v1h-6zM320 249h1v1h-1zM322 249h1v1h-1zM320 250h1v1h-1zM322 250h5v1h-5zM317 251h4v1h-4zM322 251h1v1h-1zM317 252h1v1h-1zM322 252h5v1h-5zM317 253h1v1h-1zM322 253h1v1h-1zM317 254h4v1h-4zM322 254h6v1h-6zM320 255h1v1h-1zM322 255h1v1h-1zM324 255h1v1h-1zM327 255h1v1h-1zM320 256h1v1h-1zM322 256h1v1h-1zM325 256h2v1h-2zM318 257h1v1h-1zM320 257h1v1h-1zM322 257h1v1h-1zM324 257h1v1h-1zM326 257h1v1h-1zM319 258h1v1h-1zM322 258h2v1h-2zM327 258h1v1h-1z" fill="#fff" stroke="#fff" stroke-width="0.15"/>
<text transform="translate(47,258.3) scale(0.74,1)" x="0.00 8.11 16.22 24.32 32.43 40.54 48.65 56.76" font-family="Liberation Mono, monospace" font-size="13.5" fill="#fff"  stroke="#fff" stroke-width="0.2">(Volume)</text>
<text transform="translate(99.3,258.3) scale(0.74,1)" x="0.25" font-family="Liberation Sans, sans-serif" font-size="13.7" fill="#fff"  stroke="#fff" stroke-width="0.2">0</text>
<text transform="translate(154.3,258.3) scale(0.74,1)" x="0.25" font-family="Liberation Sans, sans-serif" font-size="13.7" fill="#fff"  stroke="#fff" stroke-width="0.2">5</text>
<text transform="translate(165,258.3) scale(0.74,1)" x="0.25" font-family="Liberation Sans, sans-serif" font-size="13.7" fill="#fff"  stroke="#fff" stroke-width="0.2">0</text>
<text transform="translate(221,258.3) scale(0.74,1)" x="0.25 8.35" font-family="Liberation Sans, sans-serif" font-size="13.7" fill="#fff"  stroke="#fff" stroke-width="0.2">10</text>
<text transform="translate(238.6,258.3) scale(0.74,1)" x="0.25" font-family="Liberation Sans, sans-serif" font-size="13.7" fill="#fff"  stroke="#fff" stroke-width="0.2">0</text>
<text transform="translate(293.3,258.3) scale(0.74,1)" x="0.25 8.35" font-family="Liberation Sans, sans-serif" font-size="13.7" fill="#fff"  stroke="#fff" stroke-width="0.2">20</text>
<text transform="translate(311,258.3) scale(0.74,1)" x="0.25" font-family="Liberation Sans, sans-serif" font-size="13.7" fill="#fff"  stroke="#fff" stroke-width="0.2">0</text>
<rect x="492.6" y="-1" width="35" height="14.9" fill="#d2d2d2"/>
<rect x="492.6" y="-1" width="35" height="1" fill="#f4f4f4"/>
<rect x="492.6" y="-1" width="1" height="14.9" fill="#f4f4f4"/>
<rect x="492.6" y="12.9" width="35" height="1" fill="#777"/>
<rect x="526.6" y="-1" width="1" height="14.9" fill="#777"/>
<path d="M502 1h1v1h-1zM501 2h1v1h-1zM504 2h1v1h-1zM500 3h5v1h-5zM506 3h1v1h-1zM499 4h1v1h-1zM501 4h1v1h-1zM505 4h1v1h-1zM507 4h1v1h-1zM498 5h4v1h-4zM503 5h5v1h-5zM501 6h1v1h-1zM505 6h1v1h-1zM499 7h2v1h-2zM503 7h1v1h-1zM506 7h2v1h-2zM498 8h1v1h-1zM502 8h1v1h-1zM505 8h1v1h-1zM508 8h1v1h-1zM500 9h2v1h-2zM504 9h1v1h-1zM502 10h2v1h-2zM506 10h1v1h-1zM499 11h3v1h-3zM505 11h1v1h-1z" fill="#000" stroke="#000" stroke-width="0.3"/>
<path d="M512 1h1v1h-1zM517 1h1v1h-1zM510 2h5v1h-5zM517 2h1v1h-1zM510 3h1v1h-1zM512 3h1v1h-1zM514 3h1v1h-1zM516 3h5v1h-5zM510 4h5v1h-5zM516 4h1v1h-1zM519 4h1v1h-1zM512 5h1v1h-1zM515 5h1v1h-1zM517 5h1v1h-1zM519 5h1v1h-1zM510 6h5v1h-5zM517 6h1v1h-1zM519 6h1v1h-1zM511 7h1v1h-1zM513 7h1v1h-1zM517 7h1v1h-1zM519 7h1v1h-1zM510 8h7v1h-7zM518 8h1v1h-1zM511 9h1v1h-1zM513 9h1v1h-1zM517 9h1v1h-1zM519 9h1v1h-1zM512 10h2v1h-2zM516 10h1v1h-1zM520 10h1v1h-1zM510 11h2v1h-2zM514 11h2v1h-2z" fill="#000" stroke="#000" stroke-width="0.3"/>
<rect x="531" y="-1" width="35" height="14.9" fill="#d2d2d2"/>
<rect x="531" y="-1" width="35" height="1" fill="#f4f4f4"/>
<rect x="531" y="-1" width="1" height="14.9" fill="#f4f4f4"/>
<rect x="531" y="12.9" width="35" height="1" fill="#777"/>
<rect x="565" y="-1" width="1" height="14.9" fill="#777"/>
<path d="M538 1h1v1h-1zM541 1h1v1h-1zM538 2h1v1h-1zM541 2h1v1h-1zM544 2h2v1h-2zM536 3h4v1h-4zM541 3h3v1h-3zM538 4h1v1h-1zM541 4h1v1h-1zM546 4h1v1h-1zM538 5h1v1h-1zM541 5h6v1h-6zM538 6h2v1h-2zM537 7h2v1h-2zM541 7h6v1h-6zM536 8h1v1h-1zM538 8h1v1h-1zM541 8h1v1h-1zM546 8h1v1h-1zM538 9h1v1h-1zM541 9h6v1h-6zM538 10h1v1h-1zM541 10h1v1h-1zM546 10h1v1h-1zM537 11h2v1h-2zM541 11h6v1h-6z" fill="#000" stroke="#000" stroke-width="0.3"/>
<path d="M550 1h1v1h-1zM550 2h1v1h-1zM552 2h7v1h-7zM548 3h4v1h-4zM554 3h1v1h-1zM556 3h1v1h-1zM550 4h1v1h-1zM552 4h7v1h-7zM549 5h2v1h-2zM552 5h1v1h-1zM554 5h1v1h-1zM556 5h1v1h-1zM558 5h1v1h-1zM549 6h3v1h-3zM553 6h6v1h-6zM548 7h1v1h-1zM550 7h1v1h-1zM548 8h1v1h-1zM550 8h1v1h-1zM553 8h5v1h-5zM550 9h1v1h-1zM555 9h1v1h-1zM550 10h1v1h-1zM553 10h1v1h-1zM555 10h1v1h-1zM557 10h1v1h-1zM550 11h1v1h-1zM552 11h1v1h-1zM555 11h1v1h-1zM558 11h1v1h-1z" fill="#000" stroke="#000" stroke-width="0.3"/>
<rect x="492.6" y="242.1" width="35" height="14.9" fill="#d2d2d2"/>
<rect x="492.6" y="242.1" width="35" height="1" fill="#f4f4f4"/>
<rect x="492.6" y="242.1" width="1" height="14.9" fill="#f4f4f4"/>
<rect x="492.6" y="256.0" width="35" height="1" fill="#777"/>
<rect x="526.6" y="242.1" width="1" height="14.9" fill="#777"/>
<path d="M502 245h1v1h-1zM501 246h1v1h-1zM504 246h1v1h-1zM500 247h5v1h-5zM506 247h1v1h-1zM499 248h1v1h-1zM501 248h1v1h-1zM505 248h1v1h-1zM507 248h1v1h-1zM498 249h4v1h-4zM503 249h5v1h-5zM501 250h1v1h-1zM505 250h1v1h-1zM499 251h2v1h-2zM503 251h1v1h-1zM506 251h2v1h-2zM498 252h1v1h-1zM502 252h1v1h-1zM505 252h1v1h-1zM508 252h1v1h-1zM500 253h2v1h-2zM504 253h1v1h-1zM502 254h2v1h-2zM506 254h1v1h-1zM499 255h3v1h-3zM505 255h1v1h-1z" fill="#000" stroke="#000" stroke-width="0.3"/>
<path d="M512 245h1v1h-1zM517 245h1v1h-1zM510 246h5v1h-5zM517 246h1v1h-1zM510 247h1v1h-1zM512 247h1v1h-1zM514 247h1v1h-1zM516 247h5v1h-5zM510 248h5v1h-5zM516 248h1v1h-1zM519 248h1v1h-1zM512 249h1v1h-1zM515 249h1v1h-1zM517 249h1v1h-1zM519 249h1v1h-1zM510 250h5v1h-5zM517 250h1v1h-1zM519 250h1v1h-1zM511 251h1v1h-1zM513 251h1v1h-1zM517 251h1v1h-1zM519 251h1v1h-1zM510 252h7v1h-7zM518 252h1v1h-1zM511 253h1v1h-1zM513 253h1v1h-1zM517 253h1v1h-1zM519 253h1v1h-1zM512 254h2v1h-2zM516 254h1v1h-1zM520 254h1v1h-1zM510 255h2v1h-2zM514 255h2v1h-2z" fill="#000" stroke="#000" stroke-width="0.3"/>
<rect x="531" y="242.1" width="35" height="14.9" fill="#d2d2d2"/>
<rect x="531" y="242.1" width="35" height="1" fill="#f4f4f4"/>
<rect x="531" y="242.1" width="1" height="14.9" fill="#f4f4f4"/>
<rect x="531" y="256.0" width="35" height="1" fill="#777"/>
<rect x="565" y="242.1" width="1" height="14.9" fill="#777"/>
<path d="M538 245h1v1h-1zM541 245h1v1h-1zM538 246h1v1h-1zM541 246h1v1h-1zM544 246h2v1h-2zM536 247h4v1h-4zM541 247h3v1h-3zM538 248h1v1h-1zM541 248h1v1h-1zM546 248h1v1h-1zM538 249h1v1h-1zM541 249h6v1h-6zM538 250h2v1h-2zM537 251h2v1h-2zM541 251h6v1h-6zM536 252h1v1h-1zM538 252h1v1h-1zM541 252h1v1h-1zM546 252h1v1h-1zM538 253h1v1h-1zM541 253h6v1h-6zM538 254h1v1h-1zM541 254h1v1h-1zM546 254h1v1h-1zM537 255h2v1h-2zM541 255h6v1h-6z" fill="#000" stroke="#000" stroke-width="0.3"/>
<path d="M550 245h1v1h-1zM550 246h1v1h-1zM552 246h7v1h-7zM548 247h4v1h-4zM554 247h1v1h-1zM556 247h1v1h-1zM550 248h1v1h-1zM552 248h7v1h-7zM549 249h2v1h-2zM552 249h1v1h-1zM554 249h1v1h-1zM556 249h1v1h-1zM558 249h1v1h-1zM549 250h3v1h-3zM553 250h6v1h-6zM548 251h1v1h-1zM550 251h1v1h-1zM548 252h1v1h-1zM550 252h1v1h-1zM553 252h5v1h-5zM550 253h1v1h-1zM555 253h1v1h-1zM550 254h1v1h-1zM553 254h1v1h-1zM555 254h1v1h-1zM557 254h1v1h-1zM550 255h1v1h-1zM552 255h1v1h-1zM555 255h1v1h-1zM558 255h1v1h-1z" fill="#000" stroke="#000" stroke-width="0.3"/>
<rect x="492.6" y="350.3" width="35" height="14.9" fill="#d2d2d2"/>
<rect x="492.6" y="350.3" width="35" height="1" fill="#f4f4f4"/>
<rect x="492.6" y="350.3" width="1" height="14.9" fill="#f4f4f4"/>
<rect x="492.6" y="364.2" width="35" height="1" fill="#777"/>
<rect x="526.6" y="350.3" width="1" height="14.9" fill="#777"/>
<path d="M502 353h1v1h-1zM501 354h1v1h-1zM504 354h1v1h-1zM500 355h5v1h-5zM506 355h1v1h-1zM499 356h1v1h-1zM501 356h1v1h-1zM505 356h1v1h-1zM507 356h1v1h-1zM498 357h4v1h-4zM503 357h5v1h-5zM501 358h1v1h-1zM505 358h1v1h-1zM499 359h2v1h-2zM503 359h1v1h-1zM506 359h2v1h-2zM498 360h1v1h-1zM502 360h1v1h-1zM505 360h1v1h-1zM508 360h1v1h-1zM500 361h2v1h-2zM504 361h1v1h-1zM502 362h2v1h-2zM506 362h1v1h-1zM499 363h3v1h-3zM505 363h1v1h-1z" fill="#000" stroke="#000" stroke-width="0.3"/>
<path d="M512 353h1v1h-1zM517 353h1v1h-1zM510 354h5v1h-5zM517 354h1v1h-1zM510 355h1v1h-1zM512 355h1v1h-1zM514 355h1v1h-1zM516 355h5v1h-5zM510 356h5v1h-5zM516 356h1v1h-1zM519 356h1v1h-1zM512 357h1v1h-1zM515 357h1v1h-1zM517 357h1v1h-1zM519 357h1v1h-1zM510 358h5v1h-5zM517 358h1v1h-1zM519 358h1v1h-1zM511 359h1v1h-1zM513 359h1v1h-1zM517 359h1v1h-1zM519 359h1v1h-1zM510 360h7v1h-7zM518 360h1v1h-1zM511 361h1v1h-1zM513 361h1v1h-1zM517 361h1v1h-1zM519 361h1v1h-1zM512 362h2v1h-2zM516 362h1v1h-1zM520 362h1v1h-1zM510 363h2v1h-2zM514 363h2v1h-2z" fill="#000" stroke="#000" stroke-width="0.3"/>
<rect x="531" y="350.3" width="35" height="14.9" fill="#d2d2d2"/>
<rect x="531" y="350.3" width="35" height="1" fill="#f4f4f4"/>
<rect x="531" y="350.3" width="1" height="14.9" fill="#f4f4f4"/>
<rect x="531" y="364.2" width="35" height="1" fill="#777"/>
<rect x="565" y="350.3" width="1" height="14.9" fill="#777"/>
<path d="M538 353h1v1h-1zM541 353h1v1h-1zM538 354h1v1h-1zM541 354h1v1h-1zM544 354h2v1h-2zM536 355h4v1h-4zM541 355h3v1h-3zM538 356h1v1h-1zM541 356h1v1h-1zM546 356h1v1h-1zM538 357h1v1h-1zM541 357h6v1h-6zM538 358h2v1h-2zM537 359h2v1h-2zM541 359h6v1h-6zM536 360h1v1h-1zM538 360h1v1h-1zM541 360h1v1h-1zM546 360h1v1h-1zM538 361h1v1h-1zM541 361h6v1h-6zM538 362h1v1h-1zM541 362h1v1h-1zM546 362h1v1h-1zM537 363h2v1h-2zM541 363h6v1h-6z" fill="#000" stroke="#000" stroke-width="0.3"/>
<path d="M550 353h1v1h-1zM550 354h1v1h-1zM552 354h7v1h-7zM548 355h4v1h-4zM554 355h1v1h-1zM556 355h1v1h-1zM550 356h1v1h-1zM552 356h7v1h-7zM549 357h2v1h-2zM552 357h1v1h-1zM554 357h1v1h-1zM556 357h1v1h-1zM558 357h1v1h-1zM549 358h3v1h-3zM553 358h6v1h-6zM548 359h1v1h-1zM550 359h1v1h-1zM548 360h1v1h-1zM550 360h1v1h-1zM553 360h5v1h-5zM550 361h1v1h-1zM555 361h1v1h-1zM550 362h1v1h-1zM553 362h1v1h-1zM555 362h1v1h-1zM557 362h1v1h-1zM550 363h1v1h-1zM552 363h1v1h-1zM555 363h1v1h-1zM558 363h1v1h-1z" fill="#000" stroke="#000" stroke-width="0.3"/>
</svg>
</body></html>
